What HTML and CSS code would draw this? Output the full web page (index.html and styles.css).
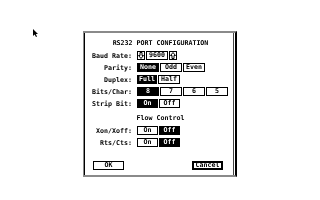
FILE: index.html
```html
<!DOCTYPE html>
<html>
<head>
<meta charset="utf-8">
<link rel="stylesheet" href="styles.css">
</head>
<body>
<div class="desktop">
  <svg class="cursor" width="6" height="9" viewBox="0 0 6 9"><polygon points="0,0 0,7 1.6,5.4 3,8 4,7.4 2.8,5 5,5" fill="#000"/></svg>
  <div class="dialog">
    <div class="frame">
      <div class="title">RS232 PORT CONFIGURATION</div>
      <div class="form">
        <span class="label">Baud Rate:</span>
        <div class="ctrls tight">
          <span class="box arrow"><svg width="6" height="7" viewBox="0 0 6 7"><path d="M2 0.5H4V3.5H5.5L3 6.5L0.5 3.5H2Z" fill="none" stroke="#000" stroke-width="1"/></svg></span>
          <span class="box value">9600</span>
          <span class="box arrow"><svg width="6" height="7" viewBox="0 0 6 7"><path d="M2 6.5H4V3.5H5.5L3 0.5L0.5 3.5H2Z" fill="none" stroke="#000" stroke-width="1"/></svg></span>
        </div>
        <span class="label">Parity:</span>
        <div class="ctrls">
          <span class="box w22 on">None</span><span class="box w22">Odd</span><span class="box w22">Even</span>
        </div>
        <span class="label">Duplex:</span>
        <div class="ctrls">
          <span class="box w20 on">Full</span><span class="box w22">Half</span>
        </div>
        <span class="label">Bits/Char:</span>
        <div class="ctrls">
          <span class="box w22 on">8</span><span class="box w22">7</span><span class="box w22">6</span><span class="box w22">5</span>
        </div>
        <span class="label">Strip Bit:</span>
        <div class="ctrls">
          <span class="box w21 on">On</span><span class="box w21">Off</span>
        </div>
      </div>
      <div class="section">Flow Control</div>
      <div class="form">
        <span class="label">Xon/Xoff:</span>
        <div class="ctrls">
          <span class="box w21">On</span><span class="box w21 on">Off</span>
        </div>
        <span class="label">Rts/Cts:</span>
        <div class="ctrls">
          <span class="box w21">On</span><span class="box w21 on">Off</span>
        </div>
      </div>
      <div class="actions">
        <span class="btn">OK</span>
        <span class="btn default">Cancel</span>
      </div>
    </div>
  </div>
</div>
</body>
</html>
```
FILE: styles.css
```css
body {
  margin: 0;
  background: #fff;
}
.desktop {
  position: relative;
  width: 320px;
  height: 200px;
  overflow: hidden;
  font-family: "DejaVu Sans Mono", "Liberation Mono", monospace;
  font-weight: bold;
  font-size: 6.64px;
  color: #000;
  background: #fff;
  filter: grayscale(1);
  -webkit-font-smoothing: antialiased;
}
.cursor {
  position: absolute;
  left: 33px;
  top: 29px;
}
.dialog {
  position: absolute;
  left: 83px;
  top: 31px;
  width: 154px;
  height: 146px;
  box-sizing: border-box;
  background: #fff;
  border-top: 2px solid #8a8a8a;
  border-left: 1px solid #8a8a8a;
  border-bottom: 2px solid #8a8a8a;
  border-right: 2px solid #000;
  display: flex;
}
.frame {
  flex: 1;
  margin-right: 1px;
  border-left: 1px solid #000;
  border-right: 1px solid #444;
  display: flex;
  flex-direction: column;
}
.title {
  margin-top: 5px;
  height: 10px;
  line-height: 10px;
  text-align: center;
  padding-left: 3px;
}
.form {
  display: grid;
  grid-template-columns: 47px auto;
  column-gap: 5px;
  grid-auto-rows: 12px;
  margin-top: 2px;
}
.label {
  text-align: right;
  line-height: 12px;
  white-space: nowrap;
}
.ctrls {
  display: flex;
  gap: 1px;
  padding-top: 1px;
}
.ctrls.tight {
  gap: 0;
}
.box {
  box-sizing: border-box;
  height: 9px;
  border: 1px solid #000;
  background: #fff;
  line-height: 7px;
  text-align: center;
  white-space: nowrap;
}
.box.on {
  background: #000;
  color: #fff;
}
.w20 { width: 20px; }
.w21 { width: 21px; }
.w22 { width: 22px; }
.arrow {
  width: 8px;
  display: flex;
  align-items: center;
  justify-content: center;
}
.value {
  width: 22px;
  margin: 0 1px;
}
.section {
  margin-top: 3px;
  height: 10px;
  line-height: 10px;
  text-align: center;
  padding-left: 3px;
}
.actions {
  margin-top: 12px;
  display: flex;
  justify-content: space-between;
  padding: 0 10px 0 8px;
}
.btn {
  box-sizing: border-box;
  width: 31px;
  height: 9px;
  border: 1px solid #000;
  line-height: 7px;
  text-align: center;
}
.btn.default {
  border-width: 2px;
  line-height: 5px;
}
```
